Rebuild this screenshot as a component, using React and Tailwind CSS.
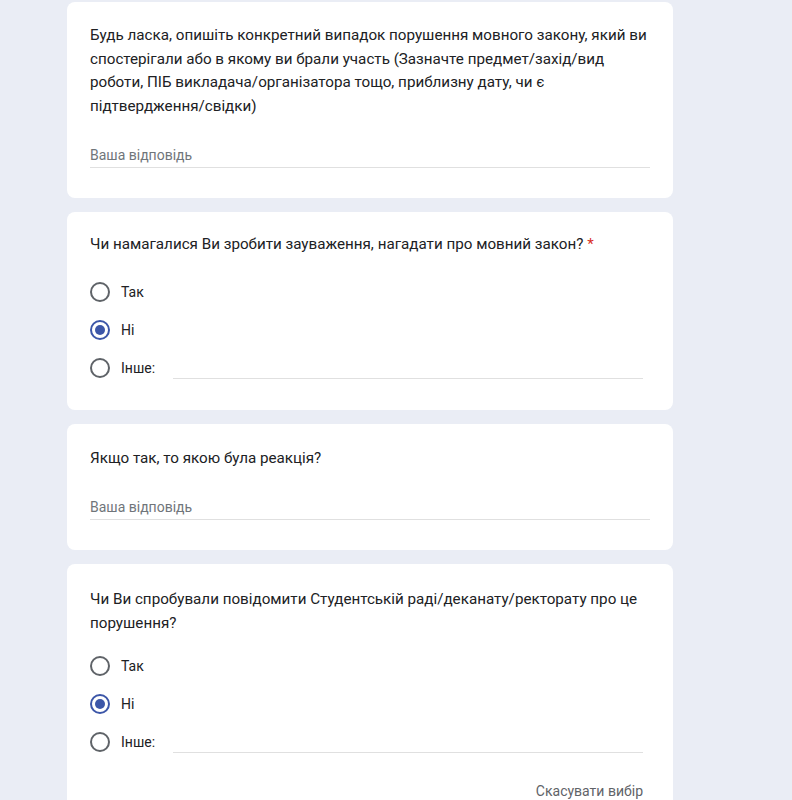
import React from "react";

const font = { fontFamily: "Roboto, 'Noto Sans', Arial, sans-serif" };

function Radio({ checked }) {
  return (
    <div
      className={
        "w-5 h-5 rounded-full border-2 flex items-center justify-center shrink-0 " +
        (checked ? "border-[#3c56a8]" : "border-[#5f6368]")
      }
    >
      {checked && <div className="w-[10px] h-[10px] rounded-full bg-[#3c56a8]" />}
    </div>
  );
}

function Option({ label, checked, other }) {
  return (
    <div className="flex items-center h-[38px]">
      <Radio checked={checked} />
      <span className="ml-[11px] text-[14px] text-[#202124] leading-5">{label}</span>
      {other && <div className="ml-[18px] flex-1 mr-[7px] self-end mb-[8px] border-b border-[#e0e0e0]" />}
    </div>
  );
}

function TextAnswer({ mt }) {
  return (
    <div className={mt}>
      <div className="text-[14px] leading-5 text-[#70757a] pb-[2px] border-b border-[#e0e0e0]">
        Ваша відповідь
      </div>
    </div>
  );
}

function Card({ children, className }) {
  return (
    <div className={"bg-white rounded-lg w-[606px] px-[23px] " + className}>{children}</div>
  );
}

export default function App() {
  return (
    <div className="w-[792px] h-[800px] overflow-hidden bg-[#eaedf5]" style={font}>
      <div className="ml-[67px] pt-[2px] flex flex-col gap-[14px]">
        <Card className="pt-[22px] pb-[30px]">
          <div className="text-[15.2px] leading-[23.5px] text-[#202124]">
            Будь ласка, опишіть конкретний випадок порушення мовного закону, який ви спостерігали або в якому ви брали участь (Зазначте предмет/захід/вид роботи, ПІБ викладача/організатора тощо, приблизну дату, чи є підтвердження/свідки)
          </div>
          <TextAnswer mt="mt-[27px]" />
        </Card>

        <Card className="pt-[20px] pb-[23px]">
          <div className="text-[15.2px] leading-6 text-[#202124]">
            Чи намагалися Ви зробити зауваження, нагадати про мовний закон?{" "}
            <span className="text-[#d93025]">*</span>
          </div>
          <div className="mt-[17px]">
            <Option label="Так" />
            <Option label="Ні" checked />
            <Option label="Інше:" other />
          </div>
        </Card>

        <Card className="pt-[22px] pb-[30px]">
          <div className="text-[15.2px] leading-6 text-[#202124]">Якщо так, то якою була реакція?</div>
          <TextAnswer mt="mt-[27px]" />
        </Card>

        <Card className="pt-[23px] pb-[40px]">
          <div className="text-[15.2px] leading-6 text-[#202124]">
            Чи Ви спробували повідомити Студентській раді/деканату/ректорату про це порушення?
          </div>
          <div className="mt-[12px]">
            <Option label="Так" />
            <Option label="Ні" checked />
            <Option label="Інше:" other />
          </div>
          <div className="flex justify-end mt-[20px] mr-[7px]">
            <span className="text-[14px] leading-5 text-[#5f6368]">Скасувати вибір</span>
          </div>
        </Card>
      </div>
    </div>
  );
}
